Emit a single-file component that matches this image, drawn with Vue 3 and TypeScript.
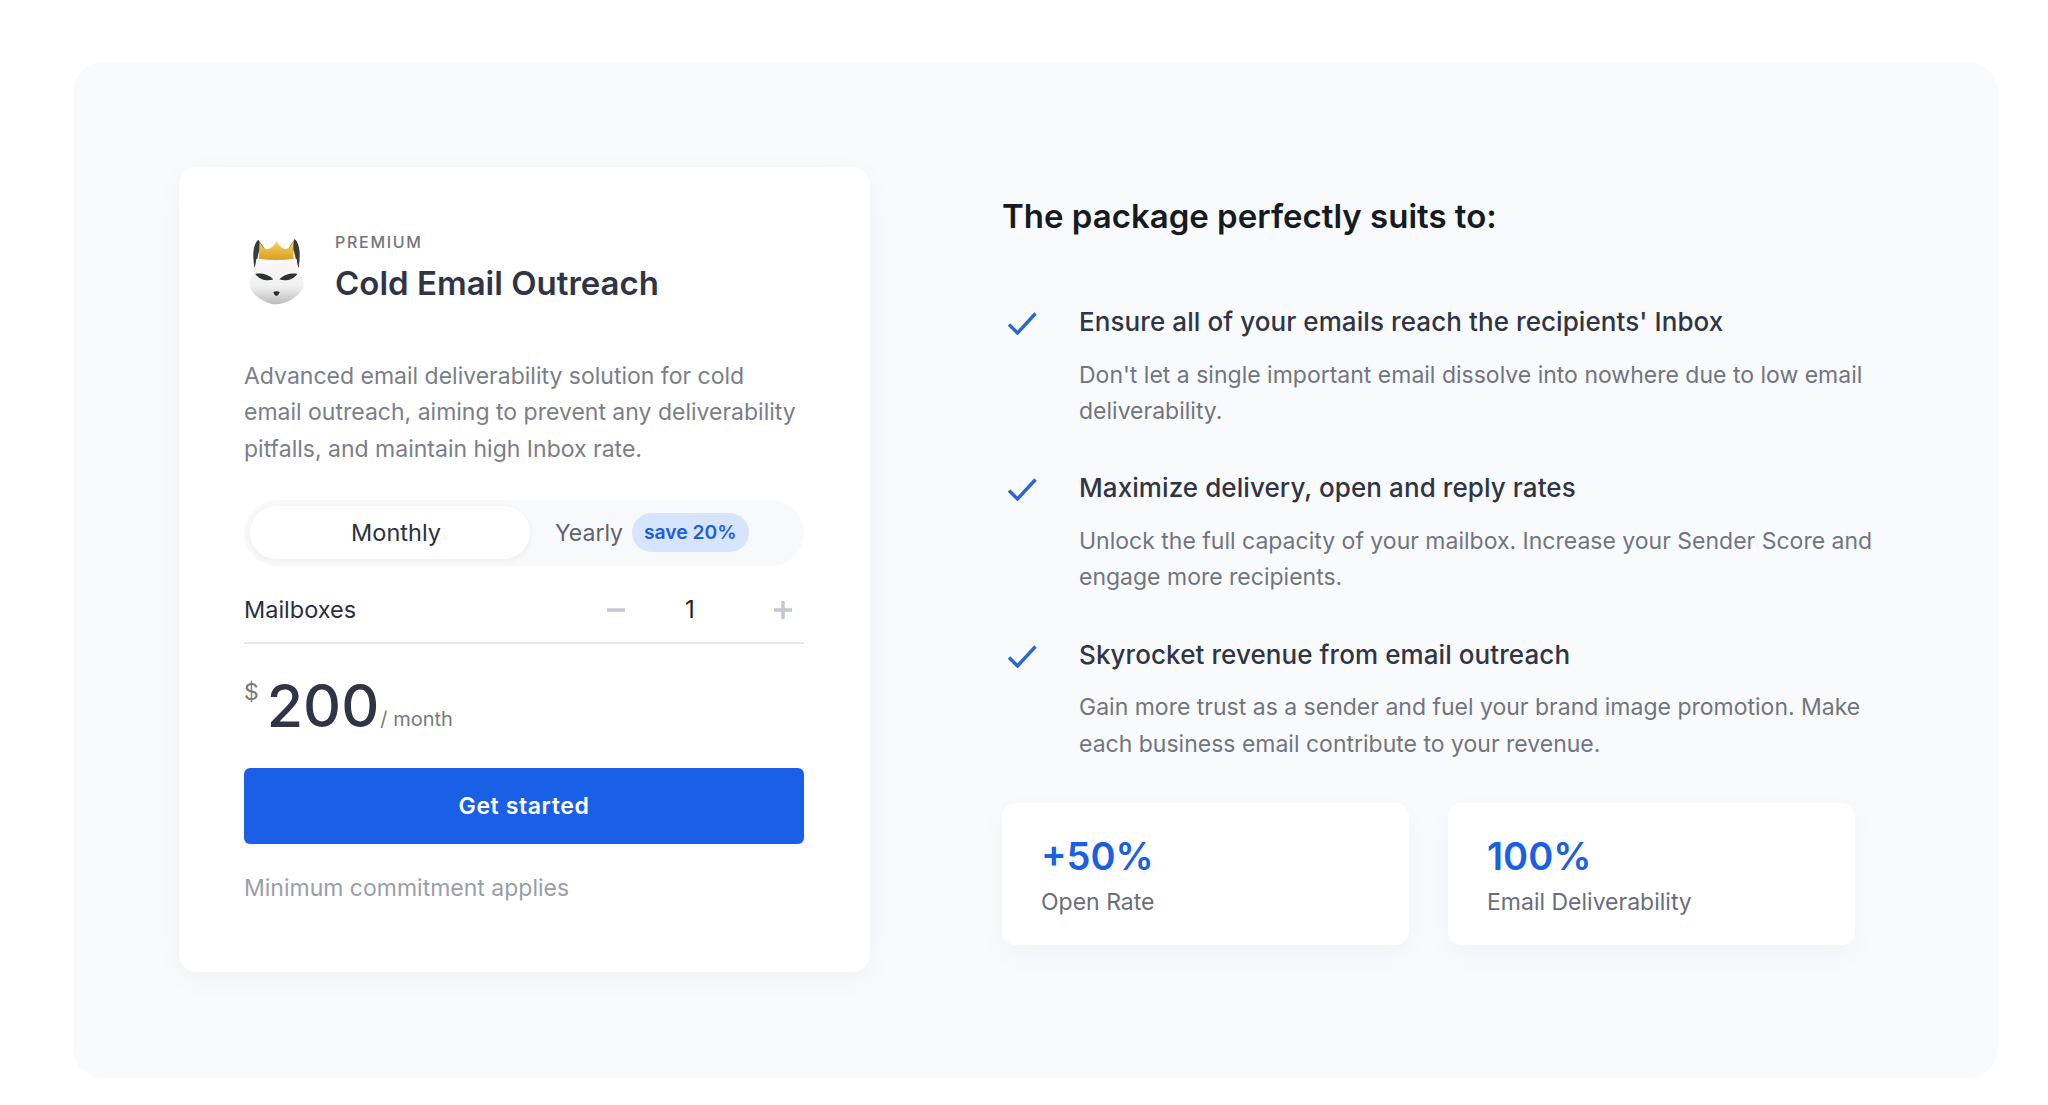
<script setup lang="ts">
interface Benefit { title: string; text: string }
interface Stat { value: string; label: string }
const benefits: Benefit[] = [
  { title: "Ensure all of your emails reach the recipients' Inbox", text: "Don't let a single important email dissolve into nowhere due to low email deliverability." },
  { title: 'Maximize delivery, open and reply rates', text: 'Unlock the full capacity of your mailbox. Increase your Sender Score and engage more recipients.' },
  { title: 'Skyrocket revenue from email outreach', text: 'Gain more trust as a sender and fuel your brand image promotion. Make each business email contribute to your revenue.' }
]
const stats: Stat[] = [
  { value: '+50%', label: 'Open Rate' },
  { value: '100%', label: 'Email Deliverability' }
]
</script>

<template>
  <main class="page">
    <section class="panel">
      <article class="card">
        <header class="head">
          <svg class="fox" viewBox="60 38 165 198" aria-hidden="true">
            <defs>
              <linearGradient id="foxHead" x1="0" y1="0" x2="0" y2="1">
                <stop offset="0" stop-color="#fbfbfb" />
                <stop offset="0.6" stop-color="#f0f0f0" />
                <stop offset="1" stop-color="#bbbbbb" />
              </linearGradient>
              <linearGradient id="foxCrown" x1="0" y1="0" x2="0" y2="1">
                <stop offset="0" stop-color="#f8d566" />
                <stop offset="1" stop-color="#d89e24" />
              </linearGradient>
              <filter id="foxSoft" x="-5%" y="-5%" width="110%" height="110%">
                <feGaussianBlur stdDeviation="1.6" />
              </filter>
            </defs>
            <g filter="url(#foxSoft)">
              <path d="M88 40C72 54 70 86 76 124L106 104 106 66Z" fill="#3a3a3c" />
              <path d="M197 38C213 52 215 86 209 124L179 104 179 66Z" fill="#3a3a3c" />
              <path d="M92 70C86 84 84 104 80 126L112 98Z" fill="#f2f2f2" />
              <path d="M193 70C199 84 201 104 205 126L173 98Z" fill="#f2f2f2" />
              <path d="M82 98C80 124 68 146 61 170 59 202 110 234 142 234 175 234 226 202 224 170 217 146 205 124 203 98Z" fill="url(#foxHead)" />
              <path d="M90 97C91 84 90 66 92 46 99 60 105 68 114 68 124 68 134 60 143 44 152 60 161 68 171 68 180 68 187 58 194 42 193 66 192 84 194 97 160 102 124 102 90 97Z" fill="url(#foxCrown)" />
              <path d="M79 143C95 139 120 145 133 159 115 166 92 161 79 143Z" fill="#2f3033" />
              <path d="M205 143C189 139 164 145 151 159 169 166 192 161 205 143Z" fill="#2f3033" />
              <path d="M133 197C138 194 147 194 152 197 150 204 146 208 142 209 138 208 135 204 133 197Z" fill="#2c2c2e" />
            </g>
          </svg>
          <div>
            <div class="tier">PREMIUM</div>
            <h2 class="name">Cold Email Outreach</h2>
          </div>
        </header>

        <p class="desc">Advanced email deliverability solution for cold email outreach, aiming to prevent any deliverability pitfalls, and maintain high Inbox rate.</p>

        <div class="toggle">
          <button class="opt" type="button">Monthly</button>
          <div class="opt-off">
            <span>Yearly</span>
            <span class="save">save 20%</span>
          </div>
        </div>

        <div class="qty">
          <span class="qty-label">Mailboxes</span>
          <div class="stepper">
            <svg class="step" viewBox="0 0 18 18" aria-hidden="true"><path d="M0 9H18" /></svg>
            <span class="count">1</span>
            <svg class="step" viewBox="0 0 18 18" aria-hidden="true"><path d="M0 9H18M9 0V18" /></svg>
          </div>
        </div>

        <div class="price">
          <span class="cur">$</span>
          <span class="amount">200</span>
          <span class="per">/ month</span>
        </div>

        <button class="cta" type="button">Get started</button>
        <p class="note">Minimum commitment applies</p>
      </article>

      <div class="side">
        <h2 class="side-title">The package perfectly suits to:</h2>
        <ul class="list">
          <li v-for="b in benefits" :key="b.title" class="item">
            <svg class="check" viewBox="0 0 30 24" aria-hidden="true"><path d="M2 13.5 10.5 22 28.5 2.5" /></svg>
            <div>
              <h3 class="item-title">{{ b.title }}</h3>
              <p class="item-text">{{ b.text }}</p>
            </div>
          </li>
        </ul>
        <div class="stats">
          <div v-for="s in stats" :key="s.label" class="stat">
            <div class="stat-value">{{ s.value }}</div>
            <div class="stat-label">{{ s.label }}</div>
          </div>
        </div>
      </div>
    </section>
  </main>
</template>

<style>
html, body { background: #fff; }
</style>

<style scoped>
.page {
  height: 1105px;
  box-sizing: border-box;
  padding: 62px 50px 27px 73px;
  font-family: Inter, "Liberation Sans", sans-serif;
  overflow: hidden;
}
.panel {
  height: 100%;
  box-sizing: border-box;
  background: #f9fafc;
  border-radius: 30px;
  padding: 105px 0 0 106px;
  display: flex;
  align-items: flex-start;
  gap: 132px;
}
.card {
  width: 691px;
  height: 805px;
  box-sizing: border-box;
  background: #fff;
  border-radius: 18px;
  box-shadow: 0 8px 30px rgba(30, 40, 70, 0.035);
  padding: 65px 66px 0 65px;
}
.head { display: flex; align-items: flex-start; gap: 31px; height: 73px; }
.fox { width: 55px; height: 66px; flex: none; margin: 7px 0 0 5px; }
.tier { font-size: 16px; line-height: 20px; font-weight: 500; letter-spacing: 1.7px; color: #71757f; }
.name { margin: 11px 0 0; font-size: 33px; line-height: 40px; font-weight: 600; color: #2f3546; }
.desc { margin: 53px 0 0; font-size: 23px; line-height: 36.3px; color: #7a7e88; }
.toggle {
  margin-top: 33px;
  height: 66px;
  box-sizing: border-box;
  background: #f8f9fb;
  border-radius: 33px;
  padding: 6px;
  display: flex;
  align-items: center;
}
.opt {
  width: 280px;
  height: 53px;
  border: 0;
  border-radius: 27px;
  padding: 0 0 0 12px;
  background: #fff;
  box-shadow: 0 2px 6px rgba(30, 40, 70, 0.05);
  font: 400 23.5px Inter, sans-serif;
  color: #2a3040;
}
.opt-off { margin-left: 25px; display: flex; align-items: center; gap: 9px; font-size: 23px; color: #5f636d; }
.save {
  background: #d7e4fd;
  color: #1a5fdf;
  font-size: 19.3px;
  font-weight: 600;
  line-height: 39px;
  padding: 0 12px;
  border-radius: 20px;
}
.qty {
  height: 78px;
  box-sizing: border-box;
  padding-top: 12px;
  display: flex;
  align-items: center;
  justify-content: space-between;
  border-bottom: 2px solid #e6e8ec;
}
.qty-label { font-size: 23.5px; font-weight: 400; color: #2a3040; }
.stepper { display: flex; align-items: center; gap: 55px; padding-right: 12px; }
.step { width: 18px; height: 18px; }
.step path { stroke: #c3c7d0; stroke-width: 3.5; fill: none; }
.count { width: 20px; margin-right: 19px; text-align: center; font-size: 24px; color: #1e2230; }
.price { display: flex; align-items: flex-start; margin-top: 27px; height: 69px; }
.cur { font-size: 23px; line-height: 28px; margin-top: 7px; color: #767a84; }
.amount { margin-left: 8px; font-size: 59px; line-height: 69px; font-weight: 500; color: #2f3546; }
.per { margin: 35px 0 0 1px; font-size: 20px; line-height: 26px; color: #767a84; }
.cta {
  display: block;
  width: 100%;
  height: 76px;
  margin-top: 28px;
  border: 0;
  border-radius: 6px;
  background: #1a60e6;
  color: #fff;
  font: 600 23px Inter, sans-serif;
  letter-spacing: 0.6px;
}
.note { margin: 30px 0 0; font-size: 23px; line-height: 28px; color: #9a9ea9; }
.side { width: 880px; }
.side-title { margin: 29px 0 0; font-size: 33px; line-height: 40px; font-weight: 600; color: #161a22; }
.list { list-style: none; margin: 68px 0 0; padding: 0; display: flex; flex-direction: column; gap: 41.4px; }
.item { display: flex; gap: 42px; padding-left: 5px; }
.check { width: 30px; height: 24px; flex: none; margin-top: 7px; }
.check path { fill: none; stroke: #2a68cf; stroke-width: 3.4; }
.item-title { margin: 0; font-size: 26px; line-height: 36px; font-weight: 500; letter-spacing: 0.08px; color: #2f3546; }
.item-text { margin: 16.5px 0 0; font-size: 23px; line-height: 36.3px; color: #71757f; width: 820px; }
.stats { display: flex; gap: 39px; margin-top: 41px; }
.stat {
  width: 407px;
  height: 142px;
  box-sizing: border-box;
  background: #fff;
  border-radius: 14px;
  box-shadow: 0 10px 30px rgba(30, 40, 70, 0.03);
  padding: 28px 39px 0;
}
.stat-value { font-size: 38px; line-height: 50px; font-weight: 600; color: #1a60e0; }
.stat-label { font-size: 23px; line-height: 30px; margin-top: 5.5px; color: #6a6e78; }
</style>
